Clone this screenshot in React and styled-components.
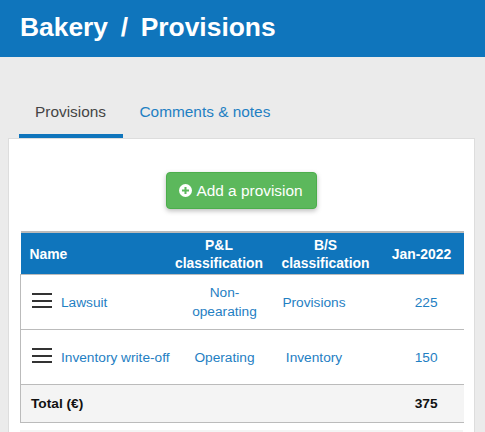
import React from 'react';
import styled, { createGlobalStyle } from 'styled-components';

const GlobalStyle = createGlobalStyle`
  html, body {
    margin: 0;
    padding: 0;
    height: 100%;
    overflow: hidden;
    background: #ebebeb;
    font-family: "Liberation Sans", Arial, sans-serif;
  }
`;

const Header = styled.header`
  height: 57px;
  padding-left: 20px;
  box-sizing: border-box;
  background: #0f75bc;
  color: #fff;
  font-size: 26.4px;
  font-weight: bold;
  line-height: 54px;
  word-spacing: -1px;
  white-space: pre;
`;

const Tabs = styled.nav`
  display: flex;
  margin: 45px 0 0 19px;
`;

const Tab = styled.a`
  padding: 0 16px 0 16.5px;
  height: 32px;
  line-height: 20px;
  font-size: 15.4px;
  color: ${({ $active }) => ($active ? '#444' : '#1f80c3')};
  border-bottom: 4px solid ${({ $active }) => ($active ? '#0f75bc' : 'transparent')};

  &:first-child {
    padding: 0 17px 0 16px;
  }
`;

const Panel = styled.section`
  margin: 0 10px 0 8px;
  padding: 33px 11px 0;
  background: #fff;
  border: 1px solid #ddd;
  border-bottom: none;
`;

const ButtonRow = styled.div`
  display: flex;
  justify-content: center;
  margin-bottom: 22px;
`;

const AddButton = styled.button`
  display: flex;
  align-items: center;
  gap: 4px;
  height: 37px;
  padding: 0 13px 0 12px;
  border: 1px solid #4cae4c;
  border-radius: 4px;
  background: #5cb85c;
  color: #fff;
  font: 15.4px "Liberation Sans", Arial, sans-serif;
  box-shadow: 0 2px 5px rgba(0, 0, 0, 0.26);
`;

const Table = styled.table`
  width: 443px;
  border-collapse: collapse;
  table-layout: fixed;
  font-size: 13.7px;
  border-top: 2px solid #bbb;
`;

const HeadCell = styled.th`
  height: 41px;
  padding: 0 ${({ $shift }) => $shift || 0}px 0 ${({ $left }) => ($left ? '9px' : '0')};
  background: #0f75bc;
  color: #fff;
  font-size: 13.9px;
  line-height: 18px;
  font-weight: bold;
  white-space: nowrap;
  text-align: ${({ $left }) => ($left ? 'left' : 'center')};
`;

const Row = styled.tr`
  height: 55px;
  border-top: 1px solid #bbb;
`;

const Cell = styled.td`
  padding: 0 ${({ $right }) => $right || 0}px 0 ${({ $lead }) => $lead || 0}px;
  color: #1f80c3;
  line-height: 19px;
  text-align: center;
`;

const ValueCell = styled.td`
  padding: 0 26px 0 0;
  color: #1f80c3;
  text-align: right;
`;

const NameCell = styled.td`
  padding: 0 0 0 11px;
  color: #1f80c3;
  border-left: 1px solid #bbb;
`;

const NameWrap = styled.div`
  display: flex;
  align-items: center;
  gap: 9px;
  white-space: nowrap;
`;

const BurgerIcon = styled.svg`
  flex: none;
  margin-bottom: 3px;
`;

const TotalRow = styled.tr`
  height: 38px;
  background: #f4f4f4;
  border-top: 1px solid #bbb;
  border-bottom: 1px solid #bbb;
`;

const TotalCell = styled.td`
  padding: 0 26px 0 0;
  font-weight: bold;
  color: #111;
  text-align: right;
`;

const TotalLabel = styled.td`
  padding: 0 0 0 10px;
  font-weight: bold;
  color: #111;
  border-left: 1px solid #bbb;
`;

const NextBlock = styled.div`
  width: 443px;
  height: 2px;
  margin-top: 7px;
  background: #f4f4f4;
`;

const Plus = () => (
  <svg width="13" height="13" viewBox="0 0 14 14" aria-hidden="true">
    <circle cx="7" cy="7" r="7" fill="#fff" />
    <path d="M3.2 7h7.6M7 3.2v7.6" stroke="#5cb85c" strokeWidth="2.2" />
  </svg>
);

const Burger = () => (
  <BurgerIcon width="20" height="15" viewBox="0 0 20 15" aria-hidden="true">
    <path d="M0 1h20M0 8h20M0 14h20" stroke="#333" strokeWidth="2" />
  </BurgerIcon>
);

const rows = [
  { name: 'Lawsuit', pl: 'Non-\nopearating', bs: 'Provisions', value: 225 },
  { name: 'Inventory write-off', pl: 'Operating', bs: 'Inventory', value: 150 },
];

const App = () => {
  return (
    <>
      <GlobalStyle />
      <Header>{'Bakery  /  Provisions'}</Header>
      <Tabs>
        <Tab $active>Provisions</Tab>
        <Tab>Comments &amp; notes</Tab>
      </Tabs>
      <Panel>
        <ButtonRow>
          <AddButton>
            <Plus />
            Add a provision
          </AddButton>
        </ButtonRow>
        <Table>
          <colgroup>
            <col width="152" />
            <col width="99" />
            <col width="108" />
            <col width="84" />
          </colgroup>
          <thead>
            <tr>
              <HeadCell $left>Name</HeadCell>
              <HeadCell $shift={6}>P&amp;L<br />classification</HeadCell>
              <HeadCell>B/S<br />classification</HeadCell>
              <HeadCell>Jan-2022</HeadCell>
            </tr>
          </thead>
          <tbody>
            {rows.map((row) => (
              <Row key={row.name}>
                <NameCell>
                  <NameWrap>
                    <Burger />
                    {row.name}
                  </NameWrap>
                </NameCell>
                <Cell $lead={5}>
                  {row.pl.split('\n').map((line) => (
                    <div key={line}>{line}</div>
                  ))}
                </Cell>
                <Cell $right={23}>{row.bs}</Cell>
                <ValueCell>{row.value}</ValueCell>
              </Row>
            ))}
            <TotalRow>
              <TotalLabel>Total (€)</TotalLabel>
              <TotalCell />
              <TotalCell />
              <TotalCell>375</TotalCell>
            </TotalRow>
          </tbody>
        </Table>
        <NextBlock />
      </Panel>
    </>
  );
};

export default App;
